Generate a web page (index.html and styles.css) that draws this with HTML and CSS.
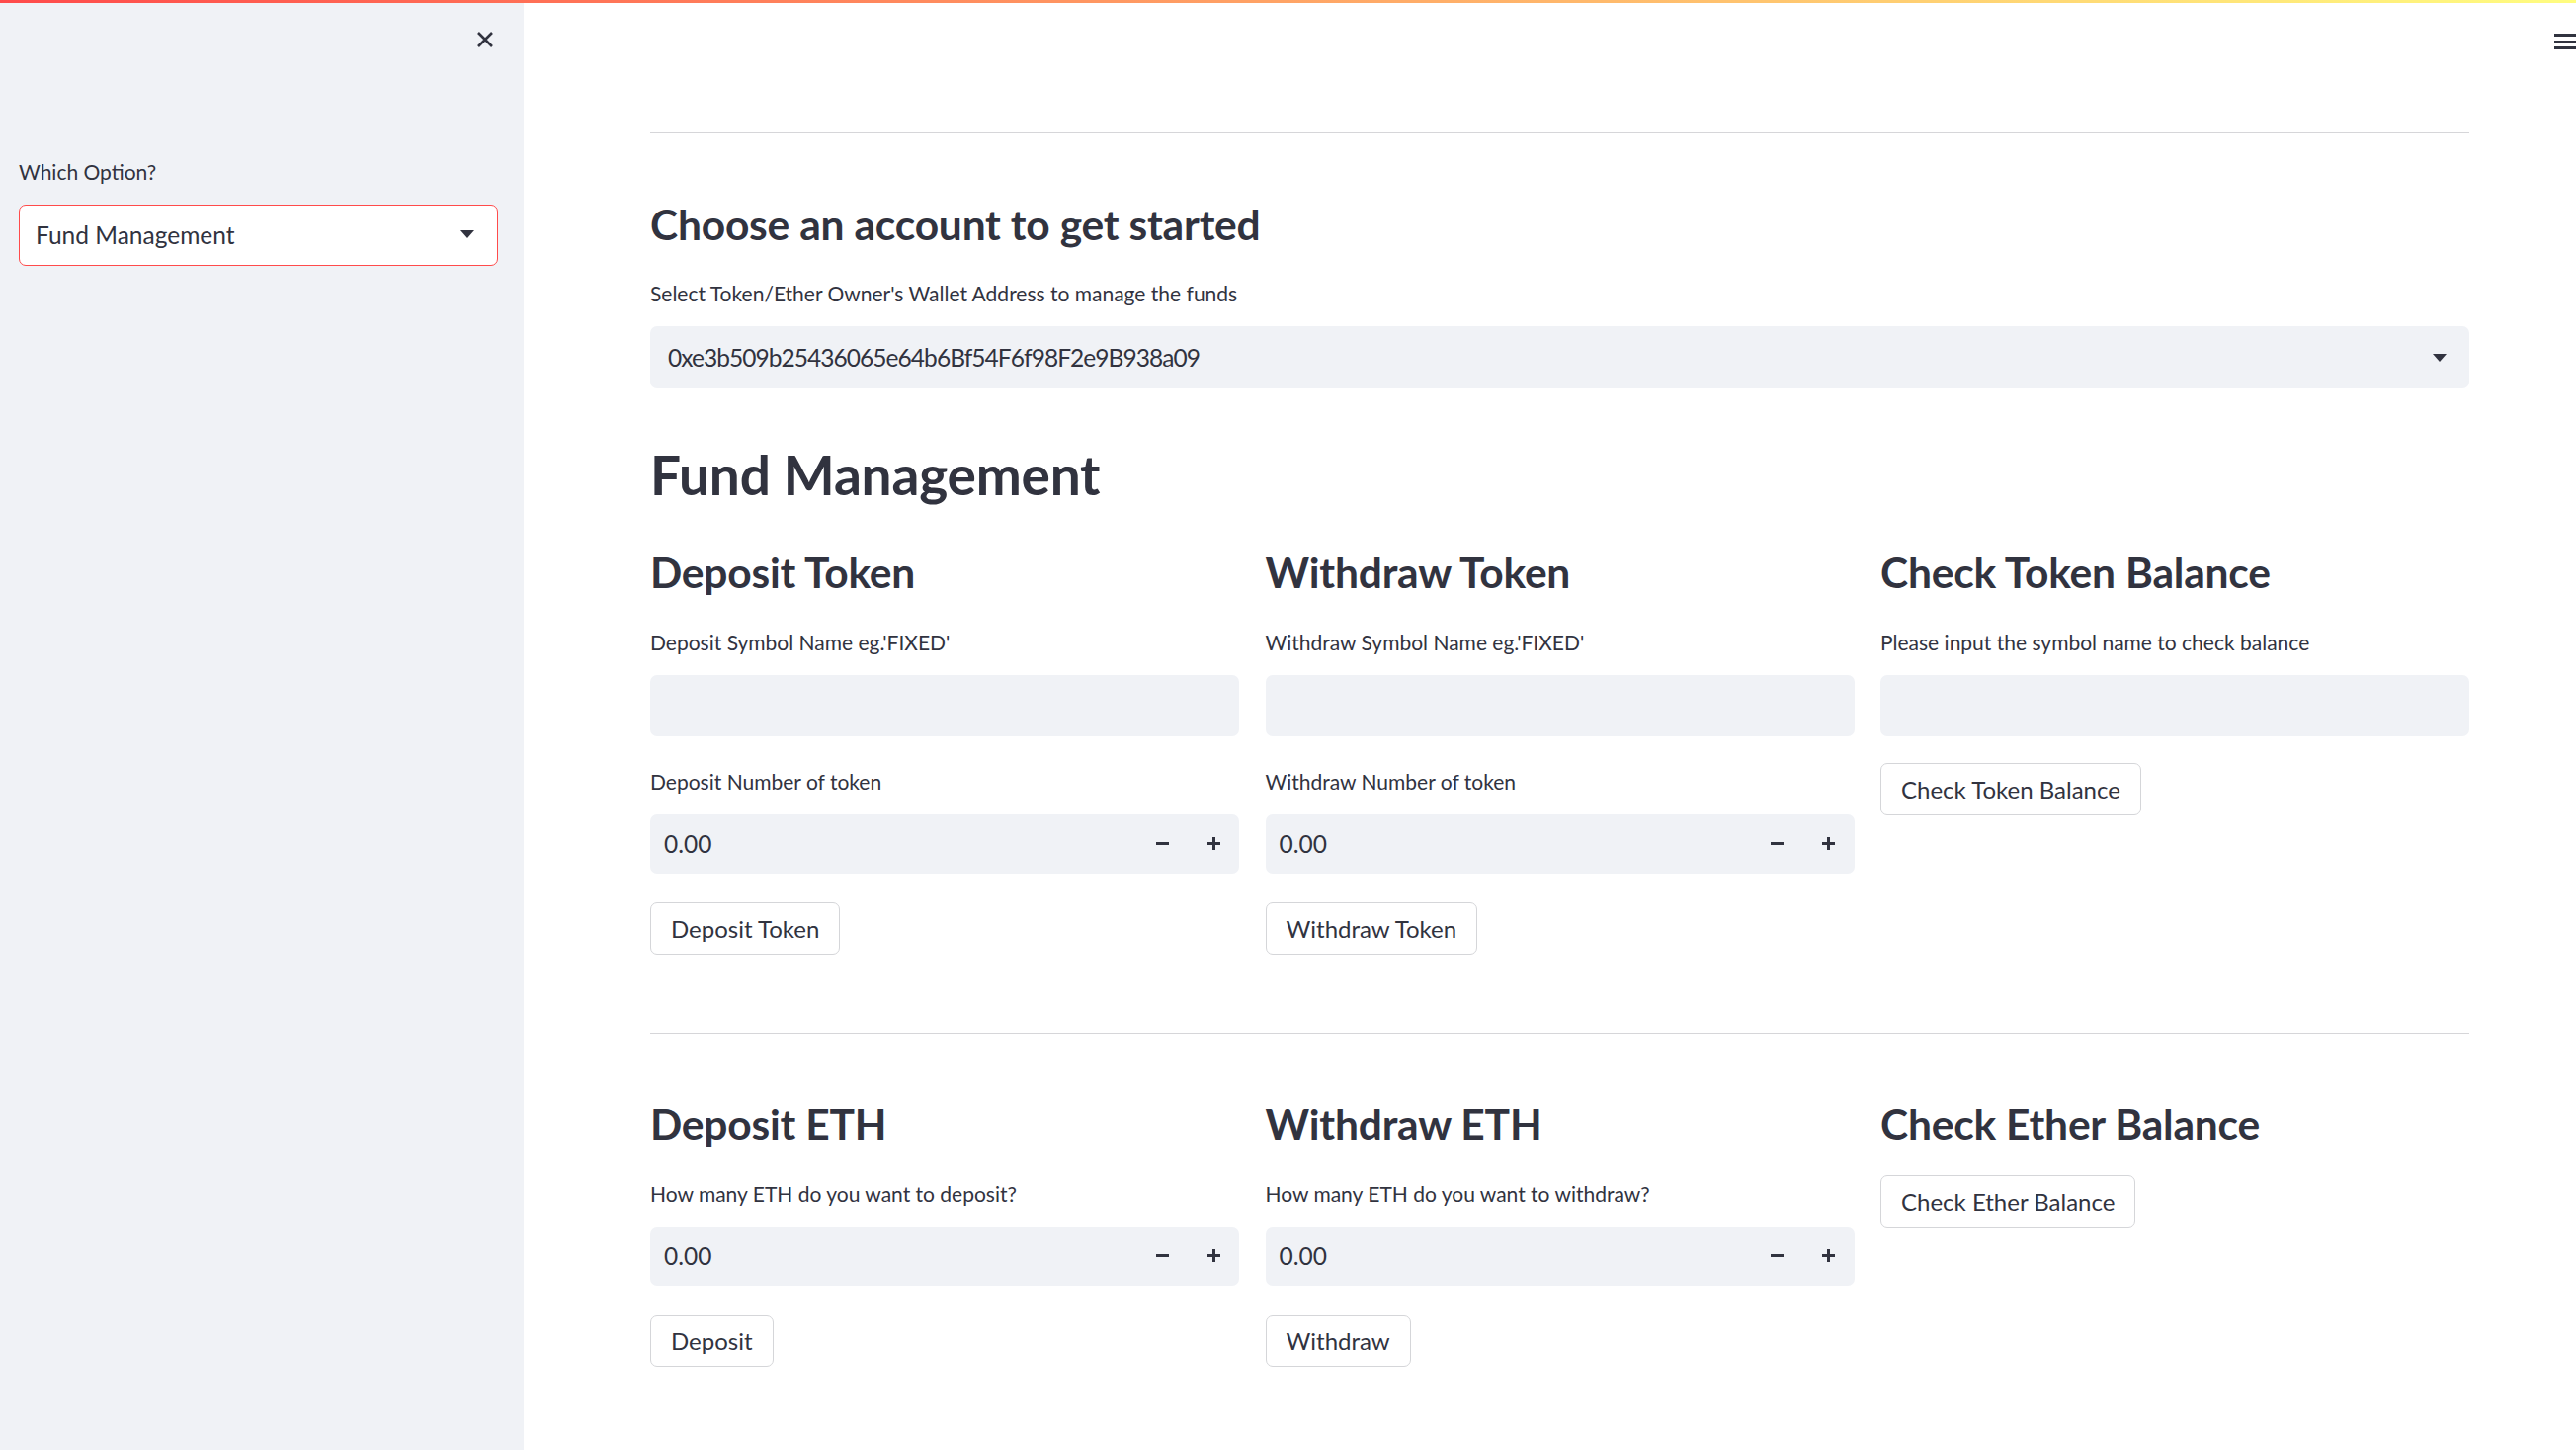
FILE: index.html
```html
<!DOCTYPE html>
<html lang="en">
<head>
<meta charset="utf-8">
<title>Fund Management</title>
<link rel="stylesheet" href="styles.css">
</head>
<body>
<div class="decoration"></div>
<div class="app">
  <aside class="sidebar">
    <div class="sidebar-top">
      <button class="close-btn" aria-label="Close sidebar">
        <svg width="18" height="18" viewBox="0 0 18 18"><path d="M2 2 L16 16 M16 2 L2 16" stroke="#31333f" stroke-width="2.6" stroke-linecap="butt" fill="none"/></svg>
      </button>
    </div>
    <div class="sidebar-content">
      <div class="label">Which Option?</div>
      <div class="select select-side">
        <span class="select-value">Fund Management</span>
        <svg class="caret" width="14" height="8" viewBox="0 0 14 8"><path d="M0 0 H14 L7 8 Z" fill="#31333f"/></svg>
      </div>
    </div>
  </aside>

  <main class="main">
    <div class="menu-btn">
      <svg width="26" height="20" viewBox="0 0 26 20"><rect x="0" y="2" width="26" height="3" fill="#31333f"/><rect x="0" y="9" width="26" height="3" fill="#31333f"/><rect x="0" y="15" width="26" height="3" fill="#31333f"/></svg>
    </div>
    <div class="block">
      <hr class="rule rule-top">
      <h3 class="subheader first">Choose an account to get started</h3>
      <div class="widget">
        <div class="label">Select Token/Ether Owner's Wallet Address to manage the funds</div>
        <div class="select">
          <span class="select-value address">0xe3b509b25436065e64b6Bf54F6f98F2e9B938a09</span>
          <svg class="caret" width="14" height="8" viewBox="0 0 14 8"><path d="M0 0 H14 L7 8 Z" fill="#31333f"/></svg>
        </div>
      </div>
      <h2 class="title">Fund Management</h2>

      <div class="columns">
        <div class="col">
          <h3 class="subheader">Deposit Token</h3>
          <div class="widget">
            <div class="label">Deposit Symbol Name eg.'FIXED'</div>
            <div class="text-input"></div>
          </div>
          <div class="widget">
            <div class="label">Deposit Number of token</div>
            <div class="number-input">
              <span class="num-value">0.00</span>
              <span class="step"><svg width="13" height="13" viewBox="0 0 13 13"><rect x="0" y="5" width="13" height="3" fill="#31333f"/></svg></span>
              <span class="step"><svg width="13" height="13" viewBox="0 0 13 13"><rect x="0" y="5" width="13" height="3" fill="#31333f"/><rect x="5" y="0" width="3" height="13" fill="#31333f"/></svg></span>
            </div>
          </div>
          <button class="btn after-num">Deposit Token</button>
        </div>

        <div class="col">
          <h3 class="subheader">Withdraw Token</h3>
          <div class="widget">
            <div class="label">Withdraw Symbol Name eg.'FIXED'</div>
            <div class="text-input"></div>
          </div>
          <div class="widget">
            <div class="label">Withdraw Number of token</div>
            <div class="number-input">
              <span class="num-value">0.00</span>
              <span class="step"><svg width="13" height="13" viewBox="0 0 13 13"><rect x="0" y="5" width="13" height="3" fill="#31333f"/></svg></span>
              <span class="step"><svg width="13" height="13" viewBox="0 0 13 13"><rect x="0" y="5" width="13" height="3" fill="#31333f"/><rect x="5" y="0" width="3" height="13" fill="#31333f"/></svg></span>
            </div>
          </div>
          <button class="btn after-num">Withdraw Token</button>
        </div>

        <div class="col">
          <h3 class="subheader">Check Token Balance</h3>
          <div class="widget">
            <div class="label">Please input the symbol name to check balance</div>
            <div class="text-input"></div>
          </div>
          <button class="btn">Check Token Balance</button>
        </div>
      </div>

      <hr class="rule rule-mid">

      <div class="columns">
        <div class="col">
          <h3 class="subheader">Deposit ETH</h3>
          <div class="widget">
            <div class="label">How many ETH do you want to deposit?</div>
            <div class="number-input">
              <span class="num-value">0.00</span>
              <span class="step"><svg width="13" height="13" viewBox="0 0 13 13"><rect x="0" y="5" width="13" height="3" fill="#31333f"/></svg></span>
              <span class="step"><svg width="13" height="13" viewBox="0 0 13 13"><rect x="0" y="5" width="13" height="3" fill="#31333f"/><rect x="5" y="0" width="3" height="13" fill="#31333f"/></svg></span>
            </div>
          </div>
          <button class="btn after-num">Deposit</button>
        </div>

        <div class="col">
          <h3 class="subheader">Withdraw ETH</h3>
          <div class="widget">
            <div class="label">How many ETH do you want to withdraw?</div>
            <div class="number-input">
              <span class="num-value">0.00</span>
              <span class="step"><svg width="13" height="13" viewBox="0 0 13 13"><rect x="0" y="5" width="13" height="3" fill="#31333f"/></svg></span>
              <span class="step"><svg width="13" height="13" viewBox="0 0 13 13"><rect x="0" y="5" width="13" height="3" fill="#31333f"/><rect x="5" y="0" width="3" height="13" fill="#31333f"/></svg></span>
            </div>
          </div>
          <button class="btn after-num">Withdraw</button>
        </div>

        <div class="col">
          <h3 class="subheader">Check Ether Balance</h3>
          <button class="btn">Check Ether Balance</button>
        </div>
      </div>
    </div>
  </main>
</div>
</body>
</html>
```

FILE: styles.css
```css
* { box-sizing: border-box; }

html, body {
  margin: 0;
  padding: 0;
  height: 100%;
}

body {
  font-family: "Source Sans Pro", Lato, "Noto Sans", sans-serif;
  color: #31333f;
  background: #ffffff;
  font-size: 24.5px;
  overflow: hidden;
}

.decoration {
  position: absolute;
  top: 0;
  left: 0;
  right: 0;
  height: 3px;
  background: linear-gradient(90deg, #ff4b4b, #fffd80);
  z-index: 10;
}

.app {
  display: flex;
  min-height: 100vh;
}

/* Sidebar */
.sidebar {
  width: 530px;
  flex: none;
  background: #f0f2f6;
  padding: 0 26px 0 19px;
}

.sidebar-top {
  height: 80px;
  display: flex;
  justify-content: flex-end;
  align-items: center;
}

.close-btn {
  width: 26px;
  height: 26px;
  padding: 0;
  border: 0;
  background: transparent;
  display: flex;
  align-items: center;
  justify-content: center;
}

.sidebar-content {
  margin-top: 75px;
}

/* Labels and inputs */
.label {
  font-size: 21px;
  height: 37px;
  line-height: 37px;
  margin-bottom: 15px;
  white-space: nowrap;
}

.select {
  height: 63px;
  background: #f0f2f6;
  border-radius: 7px;
  display: flex;
  align-items: center;
  justify-content: space-between;
  padding: 0 23px 0 18px;
  font-size: 24.5px;
}

.select-value.address {
  letter-spacing: -0.95px;
}

.select-side {
  background: #ffffff;
  border: 1.5px solid #ff4b4b;
  height: 62px;
  padding-left: 16px;
  padding-bottom: 2px;
}

.caret { flex: none; }

.text-input {
  height: 62px;
  background: #f0f2f6;
  border-radius: 7px;
}

.number-input {
  height: 60px;
  background: #f0f2f6;
  border-radius: 7px;
  display: flex;
  align-items: center;
  padding-left: 14px;
  font-size: 24.5px;
}

.num-value { flex: 1; }

.step {
  width: 52px;
  height: 100%;
  display: flex;
  align-items: center;
  justify-content: center;
}

/* Main */
.main {
  flex: 1;
  position: relative;
}

.menu-btn {
  position: absolute;
  top: 28px;
  left: 2055px;
  width: 26px;
  height: 20px;
}

.block {
  width: 1841px;
  margin-left: 128px;
  padding-top: 134px;
}

.rule {
  border: 0;
  border-top: 1px solid #d6d6d9;
  margin: 0;
}

.subheader {
  font-size: 42.5px;
  font-weight: 700;
  height: 56px;
  line-height: 56px;
  margin: 0 0 24px 0;
  white-space: nowrap;
  letter-spacing: -0.2px;
}

.subheader.first {
  margin-top: 64px;
  margin-bottom: 23px;
}

.title {
  font-size: 55px;
  font-weight: 700;
  height: 72px;
  line-height: 72px;
  margin: 51px 0 35px 0;
  letter-spacing: -0.2px;
}

.columns {
  display: grid;
  grid-template-columns: repeat(3, 1fr);
  column-gap: 26.5px;
  align-items: start;
}

.col {
  display: flex;
  flex-direction: column;
  align-items: flex-start;
}

.col .widget {
  align-self: stretch;
  margin-bottom: 26.5px;
}

.btn {
  font-family: inherit;
  font-size: 24px;
  color: #31333f;
  background: #ffffff;
  border: 1px solid #d5d6d9;
  border-radius: 7px;
  height: 53px;
  padding: 0 20px;
  cursor: pointer;
}

.btn.after-num { margin-top: 2.5px; }

.rule-mid {
  margin-top: 79px;
  margin-bottom: 63px;
}
```
